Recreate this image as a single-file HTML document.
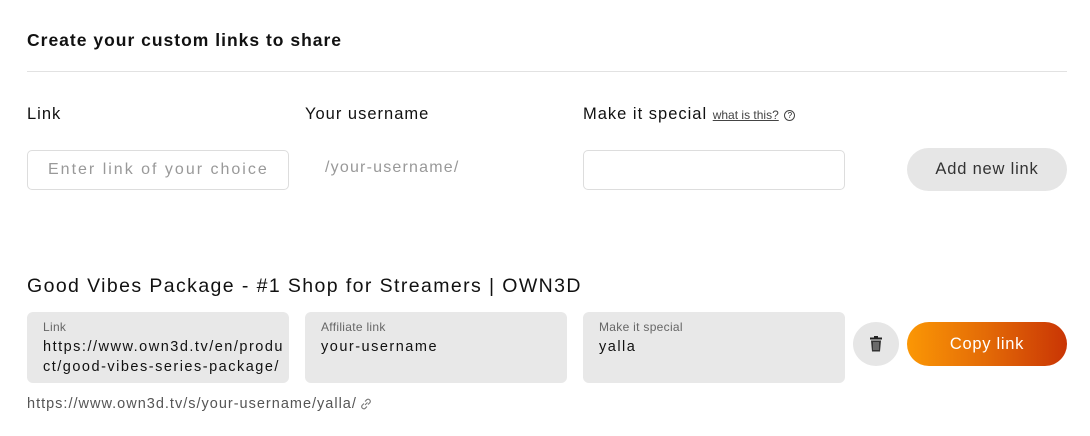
<!DOCTYPE html>
<html><head><meta charset="utf-8"><style>
body{margin:0;width:1090px;height:436px;background:#fff;font-family:"Liberation Sans",sans-serif;color:#111;position:relative;overflow:hidden}
.a{position:absolute;white-space:nowrap}
.inp{position:absolute;border:1px solid #ddd;border-radius:5px;background:#fff;box-sizing:border-box}
.card{position:absolute;top:312px;width:262px;height:71px;background:#e8e8e8;border-radius:6px}
.card .l{position:absolute;left:16px;top:8px;font-size:12px;color:#666;letter-spacing:0.3px}
.card .v{position:absolute;left:16px;top:25px;font-size:14.5px;line-height:20px;color:#111;letter-spacing:1.5px}
</style></head><body>
<div class="a" style="left:27px;top:30px;font-size:17.5px;font-weight:bold;letter-spacing:1px">Create your custom links to share</div>
<div class="a" style="left:27px;top:71px;width:1040px;height:1px;background:#e2e2e2"></div>
<div class="a" style="left:27px;top:105px;font-size:16.5px;letter-spacing:1px">Link</div>
<div class="a" style="left:305px;top:105px;font-size:16.5px;letter-spacing:1px">Your username</div>
<div class="a" style="left:583px;top:105px;font-size:16.5px;letter-spacing:1px">Make it special <span style="font-size:12px;color:#444;text-decoration:underline;letter-spacing:0">what is this?</span> <span style="display:inline-block;width:9px;height:9px;border:1px solid #444;border-radius:50%;font-size:8px;line-height:9px;text-align:center;vertical-align:1px;letter-spacing:0">?</span></div>
<div class="inp" style="left:27px;top:150px;width:262px;height:40px"><span class="a" style="left:20px;top:10px;font-size:16px;color:#999;letter-spacing:2px">Enter link of your choice</span></div>
<div class="a" style="left:325px;top:159px;font-size:16px;color:#999;letter-spacing:1.2px">/your-username/</div>
<div class="inp" style="left:583px;top:150px;width:262px;height:40px"></div>
<div class="a" style="left:907px;top:148px;width:160px;height:43px;border-radius:22px;background:#e6e6e6;text-align:center;line-height:43px;font-size:16.5px;color:#333;letter-spacing:0.8px">Add new link</div>
<div class="a" style="left:27px;top:275px;font-size:19.5px;letter-spacing:1.4px">Good Vibes Package - #1 Shop for Streamers | OWN3D</div>
<div class="card" style="left:27px"><div class="l">Link</div><div class="v">https://www.own3d.tv/en/produ<br>ct/good-vibes-series-package/</div></div>
<div class="card" style="left:305px"><div class="l">Affiliate link</div><div class="v">your-username</div></div>
<div class="card" style="left:583px"><div class="l">Make it special</div><div class="v">yalla</div></div>
<div class="a" style="left:853px;top:322px;width:46px;height:44px;border-radius:50%;background:#e6e6e6">
<svg style="position:absolute;left:16px;top:14px" width="14" height="16" viewBox="0 0 14 16"><rect x="1" y="1.5" width="12" height="2" fill="#222"/><rect x="5" y="0" width="4" height="2" fill="#222"/><path d="M2 4.5h10l-1 11H3z" fill="#333"/><path d="M5 6v8M7 6v8M9 6v8" stroke="#bbb" stroke-width="0.8"/></svg></div>
<div class="a" style="left:907px;top:322px;width:160px;height:44px;border-radius:22px;background:linear-gradient(90deg,#fb9705,#e36a06 50%,#c93505);color:#fff;text-align:center;line-height:44px;font-size:16.5px;letter-spacing:0.7px">Copy link</div>
<div class="a" style="left:27px;top:396px;font-size:14.5px;color:#555;letter-spacing:1px">https://www.own3d.tv/s/your-username/yalla/</div>
<svg class="a" style="left:359px;top:397px" width="14" height="14" viewBox="0 0 14 14" fill="none" stroke="#777" stroke-width="1.1"><path d="M6 8 L8.5 5.5"/><path d="M5 6.5 L3 8.5 a2.2 2.2 0 0 0 3 3 L8 9.5"/><path d="M9 7.5 L11 5.5 a2.2 2.2 0 0 0 -3 -3 L6 4.5"/></svg>
</body></html>
